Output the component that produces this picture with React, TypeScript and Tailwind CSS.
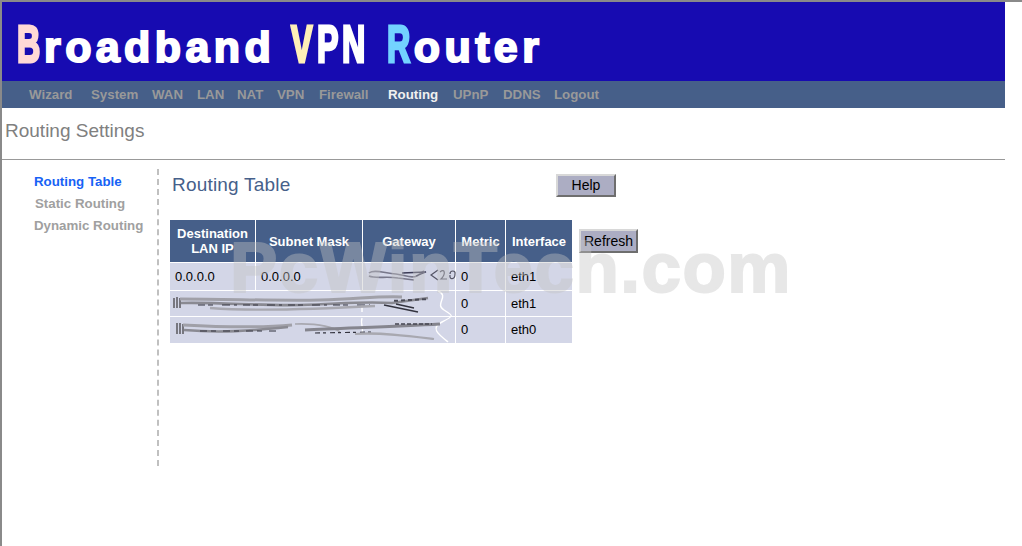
import React from 'react'

const navItems = [
    { label: 'Wizard', width: 'w-[62px]' },
    { label: 'System', width: 'w-[61px]' },
    { label: 'WAN', width: 'w-[45px]' },
    { label: 'LAN', width: 'w-[40px]' },
    { label: 'NAT', width: 'w-[40px]' },
    { label: 'VPN', width: 'w-[42px]' },
    { label: 'Firewall', width: 'w-[69px]' },
    { label: 'Routing', width: 'w-[65px]' },
    { label: 'UPnP', width: 'w-[50px]' },
    { label: 'DDNS', width: 'w-[51px]' },
    { label: 'Logout', width: 'w-[50px]' },
]

const capClass = 'inline-block origin-left scale-x-[.62] text-[52px] leading-[52px]'

function Cell({ children, className = '' }: { children?: React.ReactNode; className?: string }) {
    return <div className={`bg-[#d3d6e7] text-[13px] text-black flex items-center pl-[5px] ${className}`}>{children}</div>
}

function Head({ children }: { children: React.ReactNode }) {
    return <div className="bg-[#465f89] text-white text-[13px] font-bold leading-[15px] flex items-center justify-center text-center">{children}</div>
}

// the smeared-out addresses, in table pixels
function Smears() {
    return (
        <svg className="absolute left-0 top-0 w-[403px] h-[124px]" viewBox="0 0 403 124" fill="none">
            <g stroke="#ffffff" strokeWidth="1.4" className="blur-[0.5px]">
                <path d="M268 71 C280 76 264 84 274 90 S 284 96 272 102 S 268 114 278 122" />
                <path d="M192 85 V92 M192 98 C190 104 194 108 192 114" />
            </g>
            <g className="blur-[0.5px]">
                {/* row 1, gateway */}
                <path d="M199 53 C204 49 214 53 226 54 C236 55 240 59 247 56 L254 51 M199 56 C206 59 216 56 228 58 L244 60" stroke="#77778a" strokeWidth="1.6" />
                <path d="M232 53 L256 52 L246 56" stroke="#3a3a55" strokeWidth="1.3" />
                <path d="M268 50 L261 55 L268 60 M270 52 C275 48 276 54 271 59 H277 M280 54 C280 50 286 50 285 54 C285 60 279 60 280 55" stroke="#555566" strokeWidth="1.2" />
                {/* row 2 */}
                <path d="M4 78v10M7 77v11M10 78v10" stroke="#77777f" strokeWidth="2" />
                <path d="M10 79 C60 79 110 81 150 80 S 205 76 232 77" stroke="#a0a0a8" strokeWidth="3" />
                <path d="M11 83 C50 82 90 86 130 85 S 190 81 222 83 L 258 78" stroke="#8a8a92" strokeWidth="2.6" />
                <path d="M28 85 H200" stroke="#33333e" strokeWidth="1.1" strokeDasharray="7 3 5 9 8 4 3 6" />
                <path d="M40 88 C80 91 150 89 205 86" stroke="#a8a8b0" strokeWidth="2.4" />
                <path d="M214 85 L248 92 M226 84 L244 88" stroke="#33333e" strokeWidth="1.5" />
                <path d="M224 80 H258" stroke="#4a4a55" strokeWidth="2" strokeDasharray="4 3" transform="rotate(-3 240 80)" />
                {/* row 3 */}
                <path d="M7 103v11M10 103v11M13 104v10" stroke="#77777f" strokeWidth="2" />
                <path d="M13 105 C50 107 90 108 122 105" stroke="#a0a0a8" strokeWidth="3" />
                <path d="M14 110 C50 113 80 111 118 107" stroke="#8a8a92" strokeWidth="2.6" />
                <path d="M30 111 H110" stroke="#33333e" strokeWidth="1.1" strokeDasharray="7 4 5 7" />
                <path d="M125 104 C150 103 165 108 170 112" stroke="#a8a8b0" strokeWidth="1.6" />
                <path d="M135 110 C170 108 220 107 270 104" stroke="#85858e" strokeWidth="3" />
                <path d="M145 113 L205 112" stroke="#33333e" strokeWidth="1.2" strokeDasharray="5 3 3 4" />
                <path d="M185 114 C210 112 240 116 264 119" stroke="#a8a8b0" strokeWidth="2.2" />
                <path d="M225 104 H262" stroke="#444450" strokeWidth="1.5" strokeDasharray="4 2" />
            </g>
        </svg>
    )
}

function App() {
    return (
        <div className="w-[1022px] h-[546px] bg-white border-t-2 border-l-2 border-[#8a8a8a] overflow-hidden relative font-['Liberation_Sans',Arial,sans-serif]">
            <div className="w-[1003px]">
                <header className="h-[79px] bg-[#170bb1] pl-[15px] pt-[16px]">
                    <h1 className="text-white font-bold text-[43px] leading-[52px] tracking-[4.4px] whitespace-nowrap [-webkit-text-stroke:2px_white]">
                        <span className={`${capClass} w-[27px] text-[#ffd9d6] [-webkit-text-stroke:3px_#ffd9d6]`}>B</span>roadband{' '}
                        <span className={`${capClass} w-[26px] text-[#fff0b8] [-webkit-text-stroke:3px_#fff0b8]`}>V</span>
                        <span className={`${capClass} w-[25px] [-webkit-text-stroke:3px_white]`}>P</span>
                        <span className={`${capClass} w-[28px] [-webkit-text-stroke:3px_white]`}>N</span>{' '}
                        <span className={`${capClass} w-[27px] text-[#73d2ff] [-webkit-text-stroke:3px_#73d2ff]`}>R</span>outer
                    </h1>
                </header>
                <nav className="h-[27px] bg-[#465f89] flex items-center pl-[27px] pt-px text-[13.3px] font-bold text-[#999999]">
                    {navItems.map((item) => (
                        <span key={item.label} className={`${item.width} shrink-0 ${item.label === 'Routing' ? 'text-[#f0f0f0]' : ''}`}>{item.label}</span>
                    ))}
                </nav>
                <div className="h-[52px] border-b border-[#999999] pl-[3px] pt-[12px] text-[19px] leading-[22px] text-[#808080]">Routing Settings</div>
            </div>
            <div className="flex mt-[9px]">
                <aside className="w-[157px] h-[297px] border-r-2 border-dashed border-[#c0c0c0] flex flex-col items-start text-[13.3px] font-bold text-[#a0a0a0] leading-[22px] pt-[2px]">
                    <a className="ml-[32px] text-[#1762f5]">Routing Table</a>
                    <a className="ml-[33px]">Static Routing</a>
                    <a className="ml-[32px]">Dynamic Routing</a>
                </aside>
                <main className="pl-[11px]">
                    <div className="flex items-start h-[51px]">
                        <h2 className="ml-[2px] mt-[5px] w-[384px] text-[19px] leading-[22px] tracking-[.2px] text-[#46608a]">Routing Table</h2>
                        <button className="mt-[5px] w-[60px] h-[23px] bg-[#acadc3] border-2 border-t-[#d8d8d8] border-l-[#d8d8d8] border-r-[#6e6e6e] border-b-[#6e6e6e] text-[14px] leading-[17px] text-black">Help</button>
                    </div>
                    <div className="flex items-start">
                        <div className="relative grid grid-cols-[85px_106px_92px_49px_66px] grid-rows-[42px_27px_25px_26px] gap-px">
                            <Head>Destination<br />LAN IP</Head>
                            <Head>Subnet Mask</Head>
                            <Head>Gateway</Head>
                            <Head>Metric</Head>
                            <Head>Interface</Head>
                            <Cell>0.0.0.0</Cell>
                            <Cell>0.0.0.0</Cell>
                            <Cell />
                            <Cell>0</Cell>
                            <Cell>eth1</Cell>
                            <Cell className="col-span-3" />
                            <Cell>0</Cell>
                            <Cell>eth1</Cell>
                            <Cell className="col-span-3" />
                            <Cell>0</Cell>
                            <Cell>eth0</Cell>
                            <Smears />
                        </div>
                        <button className="ml-[7px] mt-[9px] w-[59px] h-[24px] bg-[#acadc3] border-2 border-t-[#d8d8d8] border-l-[#d8d8d8] border-r-[#6e6e6e] border-b-[#6e6e6e] text-[14px] leading-[17px] text-black">Refresh</button>
                    </div>
                </main>
            </div>
            {/* watermark sits over the page */}
            <div className="absolute left-[228px] top-[226px] text-[71px] leading-[80px] font-bold tracking-[1.5px] text-[#c4c4c4] opacity-40 whitespace-nowrap pointer-events-none [-webkit-text-stroke:2px_#c4c4c4]">PcWinTech.com</div>
        </div>
    )
}

export default App
